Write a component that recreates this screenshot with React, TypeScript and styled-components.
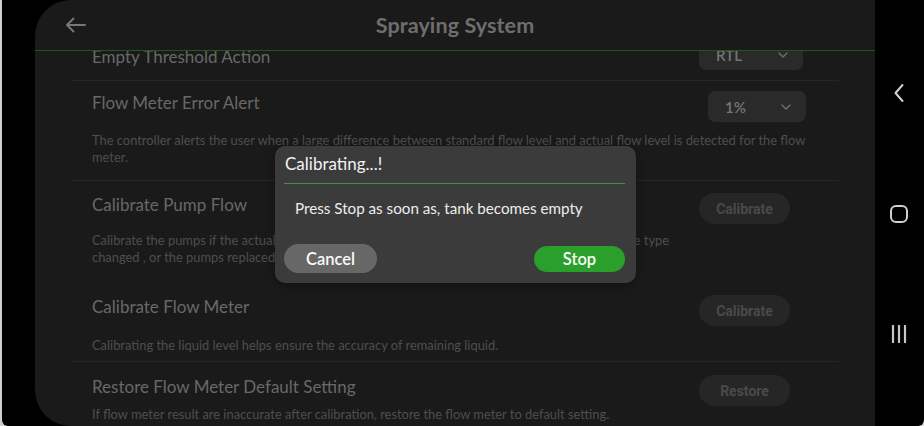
import React from "react";
import styled, { createGlobalStyle } from "styled-components";

const GlobalStyle = createGlobalStyle`
  html, body { margin: 0; padding: 0; background: #cfcfcf; overflow: hidden; }
  body { font-family: "Lato", "Noto Sans", sans-serif; }
  * { box-sizing: border-box; }
`;

const Device = styled.div`
  margin-left: 2px;
  width: 922px;
  height: 426px;
  background: #000;
  border-radius: 0 0 6px 6px;
  display: flex;
  padding-left: 33px;
  overflow: hidden;
`;

const Panel = styled.div`
  position: relative;
  width: 840px;
  height: 426px;
  background: #1a1a1a;
  border-radius: 36px 0 0 36px;
  display: flex;
  flex-direction: column;
  overflow: hidden;
`;

const Header = styled.div`
  height: 51px;
  flex: none;
  border-bottom: 1px solid #1c5a1c;
  display: grid;
  grid-template-columns: 80px 1fr 80px;
  align-items: center;
  padding-bottom: 1px;
`;

const BackButton = styled.div`
  padding-left: 30px;
  display: flex;
  align-items: center;
  color: #7a7a7a;
`;

const Title = styled.div`
  text-align: center;
  font-size: 21.5px;
  font-weight: 700;
  color: #6e6e6e;
  letter-spacing: 0.1px;
`;

const Content = styled.div`
  flex: 1;
  overflow: hidden;
  padding: 0 36px;
`;

const List = styled.div`
  margin-top: -22px;
`;

const Row = styled.div<{ $pt: number; $pb: number; $divider: boolean }>`
  padding: ${(p) => p.$pt}px 0 ${(p) => p.$pb}px 21px;
  border-bottom: 1px solid ${(p) => (p.$divider ? "#262626" : "transparent")};
`;

const RowHead = styled.div`
  display: flex;
  align-items: center;
  justify-content: space-between;
  height: 31px;
`;

const RowTitle = styled.div<{ $centered: boolean }>`
  font-size: 17px;
  line-height: 22px;
  color: #686868;
  margin-bottom: ${(p) => (p.$centered ? 0 : 8)}px;
  margin-top: ${(p) => (p.$centered ? 5 : 0)}px;
`;

const Desc = styled.div<{ $gap: number }>`
  margin-top: ${(p) => p.$gap}px;
  font-size: 12.9px;
  line-height: 17px;
  color: #4e4e4e;
  white-space: nowrap;
`;

const Select = styled.div<{ $w: number; $mr: number }>`
  width: ${(p) => p.$w}px;
  margin-right: ${(p) => p.$mr}px;
  height: 31px;
  border-radius: 7px;
  background: #2a2a2a;
  display: flex;
  align-items: center;
  justify-content: space-between;
  padding: 0 13px 0 17px;
  color: #767676;
  font-size: 15px;
  font-weight: 600;
`;

const PillButton = styled.div`
  width: 91px;
  height: 31px;
  margin-right: 49px;
  border-radius: 16px;
  background: #262626;
  color: #4a4a4a;
  font-family: "Roboto", "Liberation Sans", sans-serif;
  font-weight: 700;
  font-size: 14px;
  display: flex;
  align-items: center;
  justify-content: center;
`;

const Dialog = styled.div`
  position: absolute;
  left: 240px;
  top: 146px;
  width: 361px;
  height: 137px;
  background: #3b3b3b;
  border-radius: 10px;
  padding: 0 11px 10px 9px;
  display: flex;
  flex-direction: column;
  box-shadow: 0 2px 10px rgba(0, 0, 0, 0.35);
`;

const DialogTitle = styled.div`
  height: 38px;
  display: flex;
  align-items: center;
  padding: 0 0 3px 1px;
  border-bottom: 1px solid #3c963c;
  font-size: 17px;
  color: #f2f2f2;
`;

const DialogBody = styled.div`
  margin-top: 14px;
  padding-left: 11px;
  font-size: 15.2px;
  line-height: 20px;
  color: #ededed;
`;

const DialogFooter = styled.div`
  margin-top: auto;
  display: flex;
  align-items: center;
  justify-content: space-between;
`;

const DialogButton = styled.div<{ $primary?: boolean }>`
  width: ${(p) => (p.$primary ? 91 : 93)}px;
  height: ${(p) => (p.$primary ? 26 : 29)}px;
  border-radius: 15px;
  background: ${(p) => (p.$primary ? "#2b9f2b" : "#676767")};
  color: #fafafa;
  font-size: 16.5px;
  font-weight: 600;
  display: flex;
  align-items: center;
  justify-content: center;
`;

const NavBar = styled.div`
  flex: 1;
  display: flex;
  flex-direction: column;
  align-items: center;
  justify-content: center;
  gap: 101px;
  color: #cfcfcf;
  padding-right: 1px;
`;

const Chevron = ({ size = 14, color = "#6f6f6f" }: { size?: number; color?: string }) => (
  <svg width={size} height={size} viewBox="0 0 14 14" fill="none">
    <path d="M3 5 L7 9 L11 5" stroke={color} strokeWidth="1.4" strokeLinecap="round" strokeLinejoin="round" />
  </svg>
);

type RowData = {
  title: string;
  control: React.ReactNode;
  desc?: string[];
  pt: number;
  pb: number;
  gap?: number;
  divider: boolean;
};

const rows: RowData[] = [
  {
    title: "Empty Threshold Action",
    control: (
      <Select $w={104} $mr={36}>
        <span>RTL</span>
        <Chevron />
      </Select>
    ),
    pt: 10,
    pb: 10,
    divider: true,
  },
  {
    title: "Flow Meter Error Alert",
    control: (
      <Select $w={98} $mr={33}>
        <span>1%</span>
        <Chevron />
      </Select>
    ),
    desc: [
      "The controller alerts the user when a large difference between standard flow level and actual flow level is detected for the flow",
      "meter.",
    ],
    pt: 10,
    gap: 9.5,
    pb: 14.5,
    divider: true,
  },
  {
    title: "Calibrate Pump Flow",
    control: <PillButton>Calibrate</PillButton>,
    desc: [
      "Calibrate the pumps if the actual flow rate is not consistent with the planned flow rate, the nozzle type",
      "changed , or the pumps replaced.",
    ],
    pt: 12,
    gap: 7.5,
    pb: 14.5,
    divider: false,
  },
  {
    title: "Calibrate Flow Meter",
    control: <PillButton>Calibrate</PillButton>,
    desc: ["Calibrating the liquid level helps ensure the accuracy of remaining liquid."],
    pt: 14,
    gap: 10.5,
    pb: 7.5,
    divider: true,
  },
  {
    title: "Restore Flow Meter Default Setting",
    control: <PillButton>Restore</PillButton>,
    desc: ["If flow meter result are inaccurate after calibration, restore the flow meter to default setting."],
    pt: 13,
    gap: 0,
    pb: 10,
    divider: false,
  },
];

export default function App() {
  return (
    <>
      <GlobalStyle />
      <Device>
        <Panel>
          <Header>
            <BackButton>
              <svg width="22" height="16" viewBox="0 0 22 16" fill="none">
                <path d="M20 8 H2 M8.5 1.5 L2 8 L8.5 14.5" stroke="#777" strokeWidth="2" strokeLinecap="round" strokeLinejoin="round" />
              </svg>
            </BackButton>
            <Title>Spraying System</Title>
            <div />
          </Header>
          <Content>
            <List>
              {rows.map((r) => (
                <Row key={r.title} $pt={r.pt} $pb={r.pb} $divider={r.divider}>
                  <RowHead>
                    <RowTitle $centered={!r.desc}>{r.title}</RowTitle>
                    {r.control}
                  </RowHead>
                  {r.desc && (
                    <Desc $gap={r.gap ?? 0}>
                      {r.desc.map((l, i) => (
                        <div key={i}>{l}</div>
                      ))}
                    </Desc>
                  )}
                </Row>
              ))}
            </List>
          </Content>
          <Dialog>
            <DialogTitle>Calibrating...!</DialogTitle>
            <DialogBody>Press Stop as soon as, tank becomes empty</DialogBody>
            <DialogFooter>
              <DialogButton>Cancel</DialogButton>
              <DialogButton $primary>Stop</DialogButton>
            </DialogFooter>
          </Dialog>
        </Panel>
        <NavBar>
          <svg width="14" height="20" viewBox="0 0 14 20" fill="none">
            <path d="M10.5 2 L3.5 10 L10.5 18" stroke="#d0d0d0" strokeWidth="2" strokeLinecap="round" strokeLinejoin="round" />
          </svg>
          <svg width="20" height="20" viewBox="0 0 20 20" fill="none">
            <rect x="2" y="2" width="16" height="16" rx="5" stroke="#d0d0d0" strokeWidth="2" />
          </svg>
          <svg width="20" height="18" viewBox="0 0 20 18" fill="none">
            <path d="M4 1 V17 M10 1 V17 M16 1 V17" stroke="#c8c8c8" strokeWidth="2.2" strokeLinecap="round" />
          </svg>
        </NavBar>
      </Device>
    </>
  );
}
